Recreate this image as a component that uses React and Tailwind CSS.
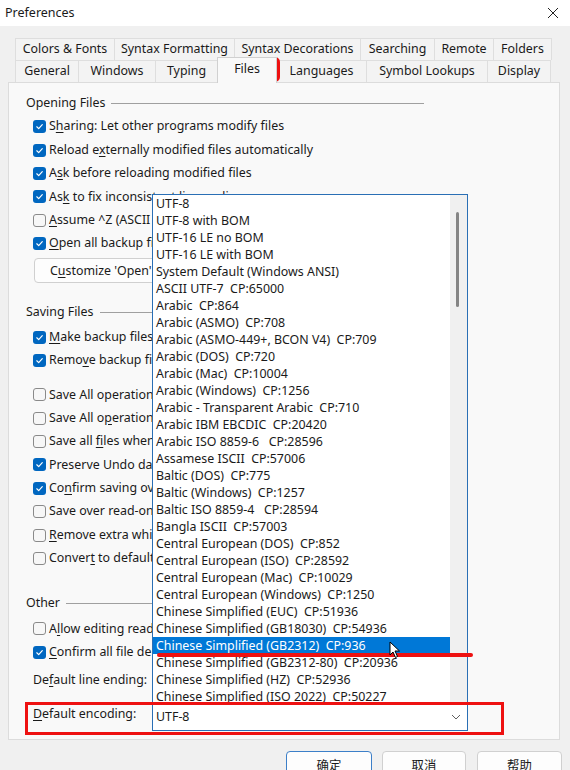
import React from 'react';

const opening = [
  [true, 'Sharing: Let other programs modify files', 1],
  [true, 'Reload externally modified files automatically', 8],
  [true, 'Ask before reloading modified files', 1],
  [true, 'Ask to fix inconsistent line endings', 2],
  [false, 'Assume ^Z (ASCII 26) is end of file', 0],
  [true, 'Open all backup files in read-only mode', 0],
];

const savingTop = [
  [true, 'Make backup files when saving', 0],
  [true, 'Remove backup files when exiting', 4],
];

const savingBottom = [
  [false, 'Save All operation saves project files only', -1],
  [false, 'Save All operation prompts for each file', 10],
  [false, 'Save all files when switching to another application', 9],
  [true, 'Preserve Undo data across file saves', -1],
  [true, 'Confirm saving over files changed on disk', 2],
  [false, 'Save over read-only files', -1],
  [false, 'Remove extra white space at end of lines', 0],
  [false, 'Convert to default line ending when saving', 6],
];

const other = [
  [false, 'Allow editing read-only files', 1],
  [true, 'Confirm all file deletions', 0],
];

const encodings = [
  'UTF-8',
  'UTF-8 with BOM',
  'UTF-16 LE no BOM',
  'UTF-16 LE with BOM',
  'System Default (Windows ANSI)',
  'ASCII UTF-7  CP:65000',
  'Arabic  CP:864',
  'Arabic (ASMO)  CP:708',
  'Arabic (ASMO-449+, BCON V4)  CP:709',
  'Arabic (DOS)  CP:720',
  'Arabic (Mac)  CP:10004',
  'Arabic (Windows)  CP:1256',
  'Arabic - Transparent Arabic  CP:710',
  'Arabic IBM EBCDIC  CP:20420',
  'Arabic ISO 8859-6   CP:28596',
  'Assamese ISCII  CP:57006',
  'Baltic (DOS)  CP:775',
  'Baltic (Windows)  CP:1257',
  'Baltic ISO 8859-4   CP:28594',
  'Bangla ISCII  CP:57003',
  'Central European (DOS)  CP:852',
  'Central European (ISO)  CP:28592',
  'Central European (Mac)  CP:10029',
  'Central European (Windows)  CP:1250',
  'Chinese Simplified (EUC)  CP:51936',
  'Chinese Simplified (GB18030)  CP:54936',
  'Chinese Simplified (GB2312)  CP:936',
  'Chinese Simplified (GB2312-80)  CP:20936',
  'Chinese Simplified (HZ)  CP:52936',
  'Chinese Simplified (ISO 2022)  CP:50227',
];

const tabsBack = [
  ['Colors & Fonts', 'w-[100px]'],
  ['Syntax Formatting', 'w-[121px]'],
  ['Syntax Decorations', 'w-[127px]'],
  ['Searching', 'w-[75px]'],
  ['Remote', 'w-[60px]'],
  ['Folders', 'w-[59px]'],
];

const tabsFront = [
  ['General', 'w-[64px]'],
  ['Windows', 'w-[78px]'],
  ['Typing', 'w-[63px]'],
  ['Files', 'w-[60px]'],
  ['Languages', 'w-[91px]'],
  ['Symbol Lookups', 'w-[122px]'],
  ['Display', 'w-[64px]'],
];

function Label({ text, k }) {
  if (k < 0) return <span>{text}</span>;
  return (
    <span>
      {text.slice(0, k)}
      <span className="underline underline-offset-2">{text[k]}</span>
      {text.slice(k + 1)}
    </span>
  );
}

function Check({ checked }) {
  if (checked) {
    return (
      <span className="w-[13px] h-[13px] rounded-[3px] bg-[#0067c0] flex items-center justify-center shrink-0">
        <svg width="9" height="9" viewBox="0 0 10 10">
          <path d="M2 5.3 L4.1 7.3 L8.1 2.9" fill="none" stroke="white" strokeWidth="1.3" strokeLinecap="round" strokeLinejoin="round" />
        </svg>
      </span>
    );
  }
  return <span className="w-[13px] h-[13px] rounded-[3px] border border-[#8a8a8a] bg-[#f7f7f7] shrink-0" />;
}

function CheckRow({ item }) {
  const [checked, text, k] = item;
  return (
    <div className="h-[23.4px] ml-[24px] flex items-center gap-[3px] whitespace-nowrap">
      <Check checked={checked} />
      <Label text={text} k={k} />
    </div>
  );
}

function Group({ title, className }) {
  return (
    <div className={`ml-[17px] w-[398px] h-[16px] flex items-center gap-[6px] ${className}`}>
      <span className="text-[#1a1a1a]">{title}</span>
      <span className="flex-1 border-t border-[#a0a0a0]" />
    </div>
  );
}

function Chevron() {
  return (
    <svg width="10" height="6" viewBox="0 0 10 6">
      <path d="M1 1 L5 5 L9 1" fill="none" stroke="#606060" strokeWidth="1" />
    </svg>
  );
}

export default function App() {
  return (
    <div className="relative w-[570px] h-[770px] overflow-hidden bg-[#f0f0f0] text-[12.4px] text-[#1a1a1a] font-['Noto_Sans','Noto_Sans_CJK_SC',sans-serif]">
      {/* title bar */}
      <div className="h-[26px] bg-white flex items-center justify-between pl-[5px] pr-[11px]">
        <span className="text-[12.5px]">Preferences</span>
        <svg width="12" height="12" viewBox="0 0 12 12">
          <path d="M1 1 L11 11 M11 1 L1 11" stroke="#222" strokeWidth="1" />
        </svg>
      </div>

      {/* tabs */}
      <div className="mt-[12px] ml-[15px]">
        <div className="flex h-[22px]">
          {tabsBack.map(([t, w]) => (
            <div key={t} className={`${w} flex items-center justify-center pb-px border-t border-l border-r border-[#dedede] -mr-px bg-[#f3f3f3]`}>
              {t}
            </div>
          ))}
        </div>
        <div className="flex h-[22px]">
          {tabsFront.map(([t, w]) =>
            t === 'Files' ? (
              <div key={t} className={`${w} relative z-10 -mt-[3px] h-[26px] flex items-start justify-center pt-[2px] border-t border-l border-r border-[#d0d0d0] bg-[#f9f9f9] -mr-px`}>
                {t}
              </div>
            ) : (
              <div key={t} className={`${w} flex items-center justify-center pb-px border-t border-l border-r border-[#dedede] -mr-px bg-[#f3f3f3]`}>
                {t}
              </div>
            )
          )}
        </div>
      </div>

      {/* panel */}
      <div className="ml-[8px] w-[552px] h-[658px] bg-[#f9f9f9] border border-[#dcdcdc]">
        <Group title="Opening Files" className="mt-[12px]" />
        <div className="mt-[4px]">
          {opening.map((it) => <CheckRow key={it[1]} item={it} />)}
        </div>
        <div className="mt-[3px] ml-[25px] w-[160px] h-[25px] rounded-[4px] border border-[#d0d0d0] bg-[#fdfdfd] flex items-center pl-[15px] whitespace-nowrap">
          <Label text="Customize 'Open' Dialog..." k={1} />
        </div>

        <Group title="Saving Files" className="mt-[21px]" />
        <div className="mt-[5px]">
          {savingTop.map((it) => <CheckRow key={it[1]} item={it} />)}
        </div>
        <div className="mt-[11px]">
          {savingBottom.map((it) => <CheckRow key={it[1]} item={it} />)}
        </div>

        <Group title="Other" className="mt-[25px]" />
        <div className="mt-[6px]">
          {other.map((it) => <CheckRow key={it[1]} item={it} />)}
        </div>
        <div className="mt-[3px] ml-[24px] h-[26px] flex items-center">
          <span className="w-[119px]"><Label text="Default line ending:" k={2} /></span>
          <div className="w-[200px] h-[26px] border border-[#d0d0d0] bg-white" />
        </div>
        <div className="mt-[11px] ml-[24px] h-[27px] flex items-start">
          <span className="w-[119px] mt-[1px]"><Label text="Default encoding:" k={0} /></span>
          <div className="w-[316px] h-[27px] border border-[#2a6fb5] border-t-0 bg-white flex items-center justify-between pl-[3px] pr-[6px]">
            <span>UTF-8</span>
            <Chevron />
          </div>
        </div>
      </div>

      {/* buttons */}
      <div className="mt-[11px] ml-[286px] flex gap-[10px] font-['Noto_Sans_CJK_SC',sans-serif]">
        <div className="w-[86px] h-[26px] rounded-[4px] border border-[#3c7fc8] bg-[#fdfdfd] flex items-center justify-center pt-[3px]">确定</div>
        <div className="w-[84px] h-[26px] rounded-[4px] border border-[#d0d0d0] bg-[#fdfdfd] flex items-center justify-center pt-[3px]">取消</div>
        <div className="w-[85px] h-[26px] rounded-[4px] border border-[#d0d0d0] bg-[#fdfdfd] flex items-center justify-center pt-[3px] ml-px">帮助</div>
      </div>

      {/* open dropdown list */}
      <div className="absolute left-[152px] top-[194px] w-[316px] h-[511px] border border-[#2a6fb5] border-b-0 bg-white flex overflow-hidden">
        <div className="flex-1">
          {encodings.map((e) => (
            <div
              key={e}
              className={`h-[17px] leading-[17px] pl-[3px] whitespace-pre ${e === 'Chinese Simplified (GB2312)  CP:936' ? 'bg-[#0078d7] text-white' : ''}`}
            >
              {e}
            </div>
          ))}
        </div>
        <div className="relative w-[17px] bg-[#f0f0f0]">
          <div className="absolute left-[6px] top-[17px] w-[2.5px] h-[95px] rounded-full bg-[#858585]" />
        </div>
      </div>

      {/* annotations */}
      <div className="absolute left-[222px] top-[57px] w-[58px] h-[25px] rounded-[5px] border-[3px] border-[#ee1111]" />
      <div className="absolute left-[25px] top-[702px] w-[479px] h-[33px] border-[3px] border-[#ee1111]" />
      <div className="absolute left-[157px] top-[653px] w-[316px] h-[3.5px] rounded-full bg-[#ee1111]" />

      {/* mouse pointer */}
      <svg className="absolute left-[389px] top-[641px]" width="12" height="18" viewBox="0 0 12 18">
        <path d="M1 1 L1 14 L4 11 L6.5 16.5 L8.5 15.5 L6 10 L10.5 10 Z" fill="white" stroke="black" strokeWidth="1" strokeLinejoin="round" />
      </svg>
    </div>
  );
}
